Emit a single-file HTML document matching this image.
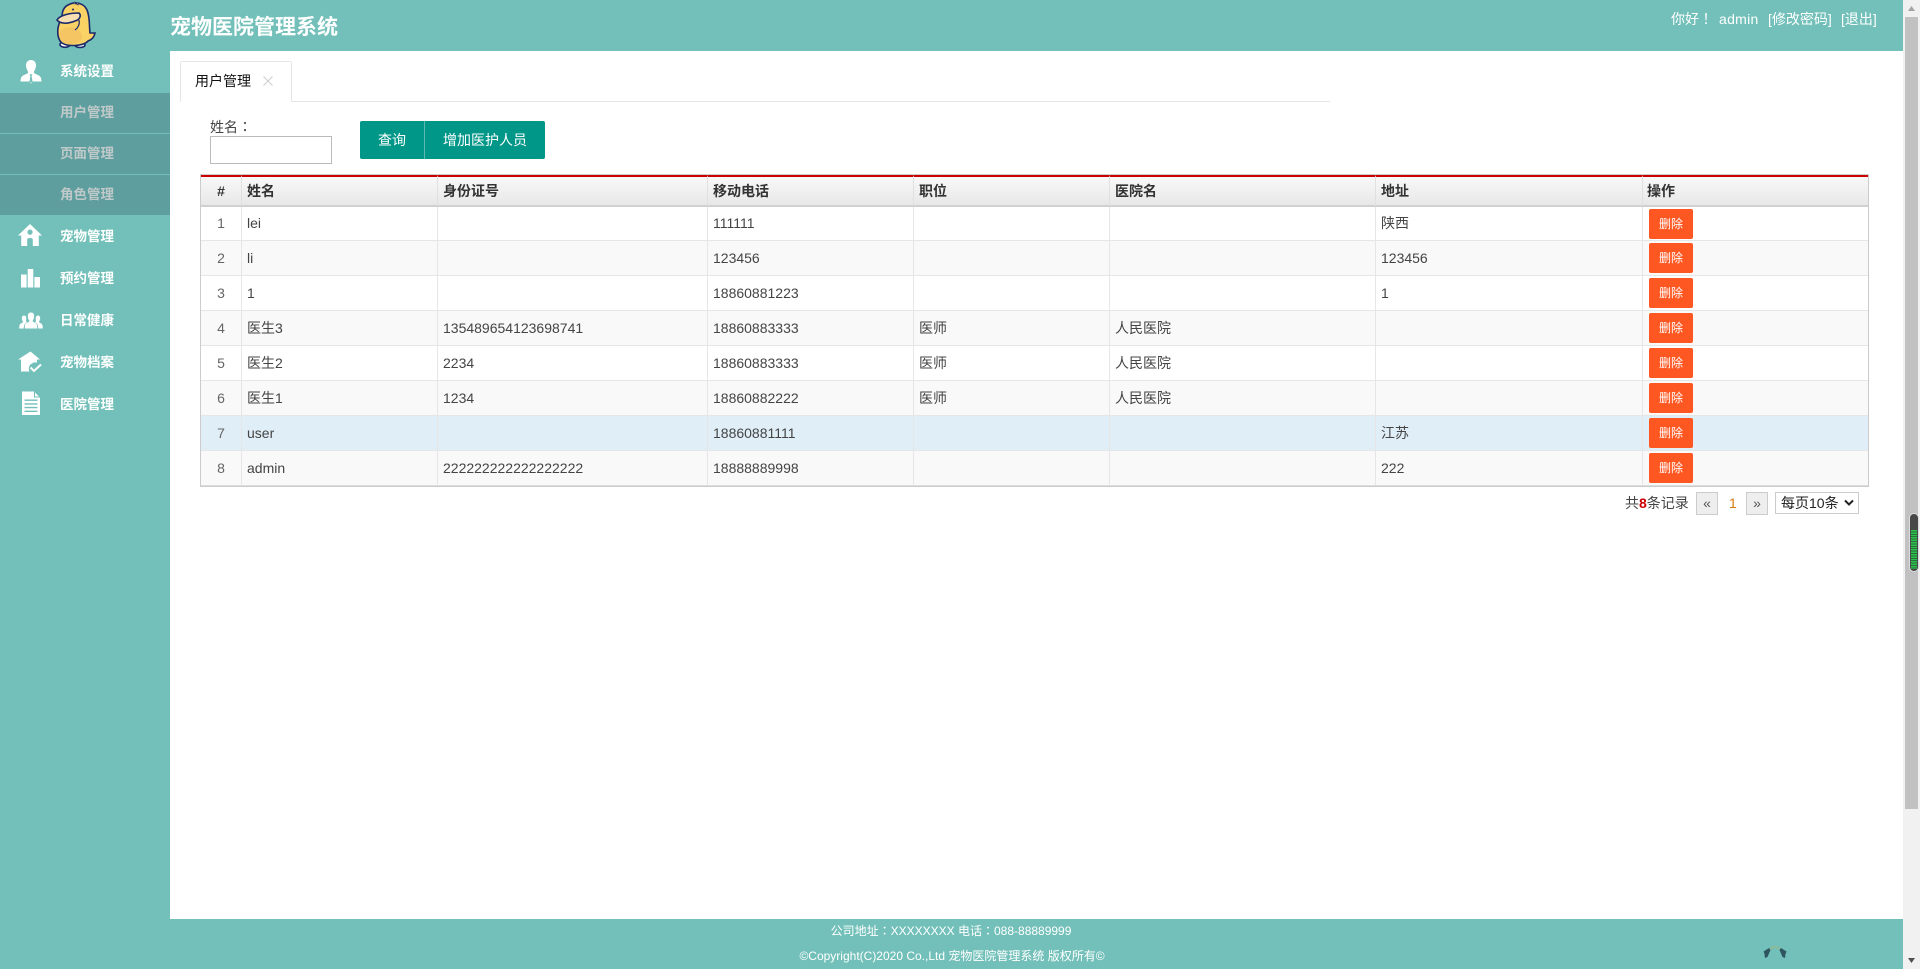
<!DOCTYPE html>
<html lang="zh-CN">
<head>
<meta charset="utf-8">
<title>宠物医院管理系统</title>
<style>
html,body{margin:0;padding:0;width:1920px;height:969px;overflow:hidden;background:#fff}
body{position:relative;font-family:"Liberation Sans","Noto Sans CJK SC",sans-serif;font-size:14px;color:#444}
.abs{position:absolute;white-space:nowrap}
.tc{font-family:"Noto Sans CJK TC",sans-serif}
#hd{position:absolute;left:0;top:0;width:1903px;height:51px;background:#72c0b9}
#side{position:absolute;left:0;top:0;width:170px;height:969px;background:#72c0b9}
#ft{position:absolute;left:170px;top:919px;width:1733px;height:50px;background:#72c0b9}
.sub{position:absolute;left:0;width:170px;height:40px;background:#5f9e9e}
.m{position:absolute;left:60px;font-size:13.5px;font-weight:bold;color:#fff;line-height:20px;white-space:nowrap}
.m.g{color:#bfc9c9}
svg{position:absolute;display:block}
#tb{position:absolute;left:200px;top:174px;width:1669px;border-collapse:separate;border-spacing:0;table-layout:fixed;border:1px solid #ccc;box-sizing:border-box;background:#fff}
#tb th{box-sizing:border-box;height:32px;padding:0 5px;text-align:left;font-size:14px;color:#333;font-weight:bold;background:linear-gradient(#f8f8f8,#e8e8e8);border-top:2px solid #c00;border-bottom:2px solid #d0d0d0;border-right:1px solid #e0e0e0}
#tb th:last-child,#tb td:last-child{border-right:0}
#tb th:last-child{padding-left:4px}
#tb td{box-sizing:border-box;height:35px;padding:0 5px;border-bottom:1px solid #e6e6e6;border-right:1px solid #e6e6e6;color:#444;font-size:14px;vertical-align:middle}
#tb tr.first td{height:34px;padding-bottom:1px}
#tb tr.first td:last-child{padding-bottom:0}
#tb tr:last-child td{border-bottom:1px solid #ddd}
#tb tr.e td{background:#f9f9f9}
#tb tr.s td{background:#e0eef7}
#tb .c{text-align:center;color:#666}
.del{display:block;width:44px;height:30px;line-height:30px;margin-left:1px;background:#ff5722;border-radius:2px;color:#fff;text-align:center;font-size:12px}
</style>
</head>
<body>
<div id="hd"></div>
<div id="side"></div>
<div id="ft"></div>

<!-- duck logo -->
<svg style="left:54px;top:0" width="44" height="50" viewBox="54 0 44 50">
<ellipse cx="65" cy="44.500" rx="5" ry="2.800" fill="#fff" stroke="#1b2a6b" stroke-width="1.600"/>
<ellipse cx="80" cy="45" rx="5" ry="2.500" fill="#fff" stroke="#1b2a6b" stroke-width="1.600"/>
<path d="M68 5C75 1 84 3 87 10C90 17 89 24 90 33L95 33C94 38 91 40 88 41C84 46 68 47 62 43C57 39 57 30 59 24L62 17C62 11 64 7 68 5Z" fill="#fbd264" stroke="#1b2a6b" stroke-width="1.600"/>
<path d="M72 3.500l3-1.500 1 2zM76 3l3 0-1 2z" fill="#fbd264" stroke="#1b2a6b" stroke-width=".8"/>
<path d="M60 32C66 24 80 26 82 36C83 42 74 45 67 44C61 43 58 38 60 32Z" fill="#f5c563"/>
<path d="M57 20C60 15 70 13 79 13C82 16 79 20 75 21C68 24 60 24 57 20Z" fill="#f7dfb4" stroke="#1b2a6b" stroke-width="1.600"/>
<path d="M79 20C80 24 78 28 75 30" fill="none" stroke="#1b2a6b" stroke-width="1.200"/>
<circle cx="73" cy="9.500" r="1" fill="#1b2a6b"/>
</svg>

<div class="abs" style="left:170px;top:14px;font-size:21px;font-weight:bold;color:#fff;line-height:28px">宠物医院管理系统</div>

<div class="abs" style="left:1671px;top:9px;font-size:14px;color:#fff;line-height:20px">你好<span class="tc" lang="zh-TW">！</span></div>
<div class="abs" style="left:1719px;top:9px;font-size:14px;color:#fff;line-height:20px;letter-spacing:.3px">admin</div>
<div class="abs" style="left:1768px;top:9px;font-size:14px;color:#fff;line-height:20px">[修改密码]</div>
<div class="abs" style="left:1841px;top:9px;font-size:14px;color:#fff;line-height:20px">[退出]</div>

<!-- sidebar -->
<div class="sub" style="top:93px"></div>
<div class="sub" style="top:134px"></div>
<div class="sub" style="top:175px"></div>

<svg style="left:18px;top:58px" width="26" height="26" viewBox="0 0 26 26" fill="#fff">
<path d="M13 2C9.500 2 8 4.600 8 7.500C8 10 9 12 10 13.500L10 15C8 16.500 4 17 3 20C2.600 21.500 2.500 23 2.500 23.500L11.500 23.500L12.400 18L11.600 16.200L14.400 16.200L13.600 18L14.500 23.500L23.500 23.500C23.500 23 23.400 21.500 23 20C22 17 18 16.500 16 15L16 13.500C17 12 18 10 18 7.500C18 4.600 16.500 2 13 2Z"/>
<path d="M12.600 24h.8v1.500h-.8z"/>
</svg>
<svg style="left:18px;top:223px" width="24" height="24" viewBox="0 0 24 24" fill="#fff">
<path d="M12 1L0 12.500H3.200V23H9.200V16.500C9.200 14.500 14.800 14.500 14.800 16.500V23H20.800V12.500H24ZM12 6.500A2.600 2.600 0 1 1 12 11.700A2.600 2.600 0 1 1 12 6.500Z" fill-rule="evenodd"/>
</svg>
<svg style="left:21px;top:268px" width="19" height="20" viewBox="0 0 19 20" fill="#fff">
<path d="M0 6.500H5.600V19.500H0ZM6.700 1H12.300V19.500H6.700ZM13.400 9H19V19.500H13.400Z"/>
</svg>
<svg style="left:19px;top:312px" width="24" height="18" viewBox="0 0 24 18" fill="#fff">
<path d="M12 0.500C9.800 0.500 8.800 2.200 8.800 4.200C8.800 6 9.500 7.400 10.200 8.300V9.600C8.600 10.600 6.400 11 6 13C5.800 14 5.800 15.500 5.800 16.500H18.200C18.200 15.500 18.200 14 18 13C17.600 11 15.400 10.600 13.800 9.600V8.300C14.500 7.400 15.200 6 15.200 4.200C15.200 2.200 14.200 0.500 12 0.500Z"/>
<path d="M5.200 3.500C3.500 3.500 2.800 4.800 2.800 6.300C2.800 7.600 3.300 8.700 3.900 9.400V10.400C2.600 11.200 1 11.600 .6 13.200C.3 14.200 .2 15.500 .2 16.500H4.800C4.800 14 5 11.800 8 10.200C7 9.300 6.800 8.400 7.200 7.800C7.500 5.500 6.900 3.500 5.200 3.500Z"/>
<path d="M18.800 3.500C20.500 3.500 21.200 4.800 21.200 6.300C21.200 7.600 20.700 8.700 20.100 9.400V10.400C21.400 11.200 23 11.600 23.400 13.200C23.700 14.200 23.800 15.500 23.800 16.500H19.200C19.200 14 19 11.800 16 10.200C17 9.300 17.200 8.400 16.800 7.800C16.500 5.500 17.100 3.500 18.800 3.500Z"/>
</svg>
<svg style="left:18px;top:351px" width="24" height="23" viewBox="0 0 24 23" fill="#fff">
<path d="M12.500 .5L0 8.500H3V20.500H11.500C10.500 18.500 10.500 15.500 12.500 13.500C14.500 11.500 17 11 19 11.500V8.500H22Z"/>
<path d="M12.500 16.500L16 20L23 13.500" fill="none" stroke="#fff" stroke-width="2"/>
</svg>
<svg style="left:22px;top:391px" width="18" height="24" viewBox="0 0 18 24">
<path d="M0 .5H12L18 6.500V24H0Z" fill="#fff"/>
<path d="M12.500 .5V6H18" fill="none" stroke="#72c0b9" stroke-width="1"/>
<path d="M2.500 9.200H15.500M2.500 12.900H15.500M2.500 16.600H15.500M2.500 20.300H15.500" stroke="#72c0b9" stroke-width="1.400"/>
</svg>

<div class="m" style="top:62px">系统设置</div>
<div class="m g" style="top:103px">用户管理</div>
<div class="m g" style="top:144px">页面管理</div>
<div class="m g" style="top:185px">角色管理</div>
<div class="m" style="top:227px">宠物管理</div>
<div class="m" style="top:269px">预约管理</div>
<div class="m" style="top:311px">日常健康</div>
<div class="m" style="top:353px">宠物档案</div>
<div class="m" style="top:395px">医院管理</div>

<!-- tab -->
<div class="abs" style="left:180px;top:61px;width:112px;height:41px;box-sizing:border-box;border:1px solid #e6e6e6;border-bottom:0;border-radius:2px 2px 0 0;background:#fff"></div>
<div class="abs" style="left:292px;top:101px;width:1038px;height:1px;background:#e6e6e6"></div>
<div class="abs" style="left:195px;top:71px;font-size:14px;color:#111;line-height:20px">用户管理</div>
<svg style="left:263px;top:76px" width="10" height="10" viewBox="0 0 10 10"><path d="M.5 .5L9.500 9.500M9.500 .5L.5 9.500" stroke="#ccc" stroke-width="1"/></svg>

<!-- search -->
<div class="abs" style="left:210px;top:117px;font-size:14px;color:#444;line-height:20px">姓名<span class="tc" lang="zh-TW">：</span></div>
<div class="abs" style="left:210px;top:136px;width:122px;height:28px;box-sizing:border-box;border:1px solid #bbb;background:#fff"></div>
<div class="abs" style="left:360px;top:121px;width:185px;height:38px;background:#009688;border-radius:2px"></div>
<div class="abs" style="left:424px;top:121px;width:1px;height:38px;background:#5fb9b0"></div>
<div class="abs" style="left:378px;top:130px;font-size:14px;color:#fff;line-height:20px">查询</div>
<div class="abs" style="left:443px;top:130px;font-size:14px;color:#fff;line-height:20px">增加医护人员</div>

<!-- table -->
<table id="tb">
<colgroup><col style="width:41px"><col style="width:196px"><col style="width:270px"><col style="width:206px"><col style="width:196px"><col style="width:266px"><col style="width:267px"><col></colgroup>
<tr><th style="text-align:center">#</th><th>姓名</th><th>身份证号</th><th>移动电话</th><th>职位</th><th>医院名</th><th>地址</th><th>操作</th></tr>
<tr class="first"><td class="c">1</td><td>lei</td><td></td><td>111111</td><td></td><td></td><td>陕西</td><td><span class="del">删除</span></td></tr>
<tr class="e"><td class="c">2</td><td>li</td><td></td><td>123456</td><td></td><td></td><td>123456</td><td><span class="del">删除</span></td></tr>
<tr><td class="c">3</td><td>1</td><td></td><td>18860881223</td><td></td><td></td><td>1</td><td><span class="del">删除</span></td></tr>
<tr class="e"><td class="c">4</td><td>医生3</td><td>135489654123698741</td><td>18860883333</td><td>医师</td><td>人民医院</td><td></td><td><span class="del">删除</span></td></tr>
<tr><td class="c">5</td><td>医生2</td><td>2234</td><td>18860883333</td><td>医师</td><td>人民医院</td><td></td><td><span class="del">删除</span></td></tr>
<tr class="e"><td class="c">6</td><td>医生1</td><td>1234</td><td>18860882222</td><td>医师</td><td>人民医院</td><td></td><td><span class="del">删除</span></td></tr>
<tr class="s"><td class="c">7</td><td>user</td><td></td><td>18860881111</td><td></td><td></td><td>江苏</td><td><span class="del">删除</span></td></tr>
<tr class="e"><td class="c">8</td><td>admin</td><td>222222222222222222</td><td>18888889998</td><td></td><td></td><td>222</td><td><span class="del">删除</span></td></tr>
</table>

<!-- pagination -->
<div class="abs" style="left:1625px;top:493px;font-size:14px;color:#444;line-height:20px">共<b style="color:#c00">8</b>条记录</div>
<div class="abs" style="left:1696px;top:492px;width:22px;height:23px;box-sizing:border-box;border:1px solid #ccc;background:#eee;text-align:center;line-height:21px;font-size:14px;color:#555">«</div>
<div class="abs" style="left:1729px;top:493px;font-size:14px;color:#d87a10;line-height:20px">1</div>
<div class="abs" style="left:1746px;top:492px;width:22px;height:23px;box-sizing:border-box;border:1px solid #ccc;background:#eee;text-align:center;line-height:21px;font-size:14px;color:#555">»</div>
<div class="abs" style="left:1775px;top:492px;width:84px;height:22px;box-sizing:border-box;border:1px solid #ccc;background:#fff;font-size:14px;color:#222;line-height:20px;padding-left:5px">每页10条</div>
<svg style="left:1844px;top:499px" width="10" height="8" viewBox="0 0 10 8"><path d="M1 1.500L5 5.500L9 1.500" fill="none" stroke="#222" stroke-width="2"/></svg>

<!-- footer -->
<div class="abs" style="left:170px;top:921px;width:1562px;text-align:center;font-size:12px;color:#fff;line-height:20px">公司地址<span class="tc" lang="zh-TW">：</span>XXXXXXXX 电话<span class="tc" lang="zh-TW">：</span>088-88889999</div>
<div class="abs" style="left:170px;top:946px;width:1564px;text-align:center;font-size:12px;color:#fff;line-height:20px">©Copyright(C)2020 Co.,Ltd 宠物医院管理系统 版权所有©</div>
<svg style="left:1760px;top:942px" width="30" height="22" viewBox="0 0 30 22">
<path d="M3.500 9.500L9 6L10.500 8L7.500 15L5 16L4.500 12Z" fill="#2f5660"/>
<path d="M26.500 9.500L21 6L19.500 8L22.500 15L25 16L25.500 12Z" fill="#2f5660"/>
<path d="M10 7Q15 3 20 7" fill="none" stroke="#8fb98f" stroke-width="1.800"/>
</svg>

<!-- scrollbar -->
<div class="abs" style="left:1903px;top:0;width:17px;height:969px;background:#f1f1f1"></div>
<div class="abs" style="left:1905px;top:17px;width:13px;height:792px;background:#c1c1c1"></div>
<svg style="left:1903px;top:0" width="17" height="969" viewBox="0 0 17 969">
<path d="M8.500 6L12 11H5Z" fill="#a3a3a3"/>
<path d="M5 958H12L8.500 963Z" fill="#505050"/>
</svg>
<div class="abs" style="left:1910px;top:514px;width:8px;height:57px;background:#484848;border-radius:4px;box-shadow:0 0 0 1px #ddd"></div>
<div class="abs" style="left:1911px;top:530px;width:6px;height:39px;background:repeating-linear-gradient(#2bc24e 0,#2bc24e 1.400px,#2a6b3a 1.400px,#2a6b3a 2.400px)"></div>
</body>
</html>
